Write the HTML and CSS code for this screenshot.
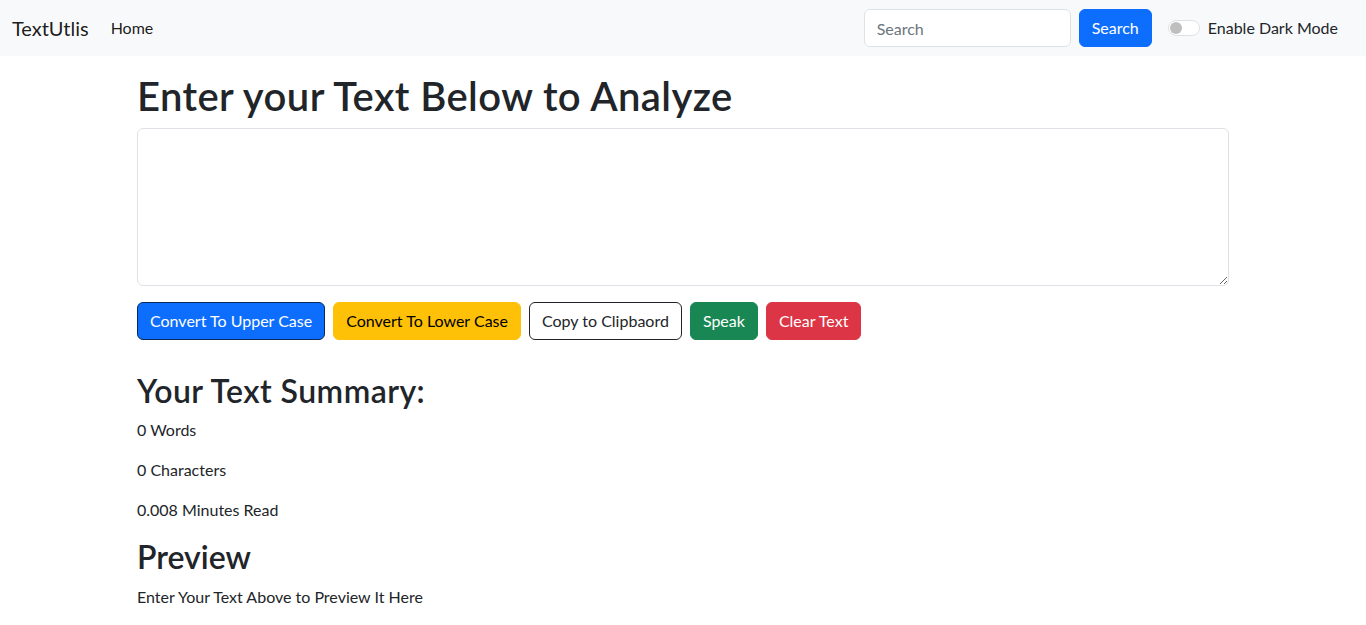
FILE: index.html
```html
<!DOCTYPE html>
<html lang="en">
<head>
<meta charset="utf-8">
<title>TextUtlis</title>
<link rel="stylesheet" href="styles.css">
</head>
<body>
<nav class="navbar">
  <div class="nav-left">
    <a class="brand" href="#">TextUtlis</a>
    <a class="nav-link" href="#">Home</a>
  </div>
  <div class="nav-right">
    <form class="search-form">
      <input class="search-input" type="search" placeholder="Search">
      <button class="btn btn-primary" type="button">Search</button>
    </form>
    <div class="switch">
      <span class="switch-track"><span class="switch-knob"></span></span>
      <label class="switch-label">Enable Dark Mode</label>
    </div>
  </div>
</nav>
<main class="container">
  <h1 class="title">Enter your Text Below to Analyze</h1>
  <textarea class="textarea" rows="6"></textarea>
  <div class="actions">
    <button class="btn btn-primary btn-dark-border" type="button">Convert To Upper Case</button>
    <button class="btn btn-warning" type="button">Convert To Lower Case</button>
    <button class="btn btn-outline" type="button">Copy to Clipbaord</button>
    <button class="btn btn-success" type="button">Speak</button>
    <button class="btn btn-danger" type="button">Clear Text</button>
  </div>
  <section class="summary">
    <h2 class="heading heading-wide">Your Text Summary:</h2>
    <p class="stat">0 Words</p>
    <p class="stat">0 Characters</p>
    <p class="stat">0.008 Minutes Read</p>
    <h2 class="heading">Preview</h2>
    <p class="preview">Enter Your Text Above to Preview It Here</p>
  </section>
</main>
</body>
</html>
```
FILE: styles.css
```css
*{box-sizing:border-box;}
body{margin:0;font-family:"Lato","Noto Sans",sans-serif;font-size:16px;line-height:1.5;color:#212529;background:#fff;}
a{text-decoration:none;color:inherit;}
.navbar{height:56px;background:#f8f9fa;display:flex;align-items:center;justify-content:space-between;padding:0 28px 0 12px;}
.nav-left{display:flex;align-items:center;}
.brand{font-size:20px;line-height:30px;margin-right:14px;color:rgba(0,0,0,.9);}
.nav-link{padding:8px;color:rgba(0,0,0,.9);font-size:16px;}
.nav-right{display:flex;align-items:center;gap:16px;}
.search-form{display:flex;gap:8px;}
.search-input{width:207px;height:38px;border:1px solid #dee2e6;border-radius:6px;padding:6px 12px;font:inherit;color:#212529;background:#fff;}
.search-input::placeholder{color:#6c757d;}
.btn{font:inherit;font-size:16px;line-height:24px;padding:6px 12px;border-radius:6px;border:1px solid transparent;cursor:pointer;height:38px;}
.btn-primary{background:#0d6efd;color:#fff;border-color:#0d6efd;}
.btn-dark-border{border-color:#0a2a5e;}
.btn-warning{background:#ffc107;border-color:#ffc107;color:#000;}
.btn-outline{background:#fff;border-color:#212529;color:#212529;}
.btn-success{background:#198754;border-color:#198754;color:#fff;}
.btn-danger{background:#dc3545;border-color:#dc3545;color:#fff;}
.switch{display:flex;align-items:center;gap:8px;}
.switch-track{width:32px;height:16px;border:1px solid #dee2e6;border-radius:8px;background:#fff;position:relative;display:inline-block;}
.switch-knob{position:absolute;left:1px;top:1px;width:12px;height:12px;border-radius:50%;background:#bfbfbf;}
.switch-label{font-size:16px;color:#212529;}
.container{width:1092px;margin:16px auto;}
.title{font-size:40px;font-weight:600;line-height:48px;margin:0 0 8px;letter-spacing:0.42px;}
.textarea{display:block;width:100%;height:158px;border:1px solid #dee2e6;border-radius:6px;padding:6px 12px;font:inherit;resize:vertical;margin:0 0 16px;}
.actions{display:flex;gap:8px;}
.summary{margin-top:32px;}
.heading{font-size:32px;font-weight:600;line-height:38.4px;margin:0 0 8px;}
.heading-wide{letter-spacing:0.45px;}
.stat{margin:0 0 16px;font-size:16px;line-height:24px;}
.preview{margin:0;font-size:16px;line-height:24px;}
```
